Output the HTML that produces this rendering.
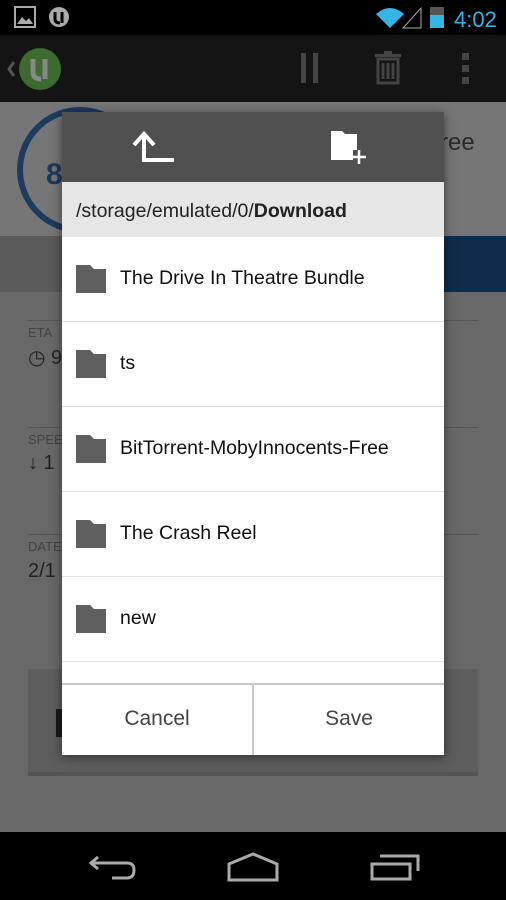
<!DOCTYPE html>
<html><head><style>
*{margin:0;padding:0;box-sizing:border-box}
body{width:506px;height:900px;background:#686868;font-family:"Liberation Sans",sans-serif;position:relative;overflow:hidden}
.a{position:absolute}
.row{position:absolute;left:0;width:382px;height:85px;border-bottom:1px solid #e2e2e2}
.row svg{position:absolute;left:14px;top:28px}
.row span{position:absolute;left:58px;top:30px;font-size:19.5px;color:#111}
</style></head><body>
<div class="a" style="left:0;top:0;width:506px;height:35px;background:#000"></div>
<svg class="a" style="left:0;top:0" width="506" height="35">
<rect x="15" y="7" width="20" height="20" fill="none" stroke="#aaa" stroke-width="2"/>
<path d="M17 24 L22 17 L26 21 L29 18 L33 24Z" fill="#aaa"/>
<circle cx="59" cy="17" r="10" fill="#aaa"/><path d="M55 12 v7 q0 4 5 4 M62 12 v11" stroke="#000" stroke-width="3" fill="none"/>
<path d="M376 14 Q390 2 404 14 L390 28Z" fill="#33b5e5"/>
<path d="M403 28 L421 8 V28Z" fill="none" stroke="#aaa" stroke-width="1"/>
<rect x="430" y="7" width="14" height="21" fill="#33b5e5"/><rect x="430" y="7" width="14" height="8" fill="#555"/>
<text x="454" y="27" font-size="22" fill="#33b5e5" font-family="Liberation Sans">4:02</text>
</svg>
<div class="a" style="left:0;top:35px;width:506px;height:67px;background:#141414"></div>
<svg class="a" style="left:0;top:35px" width="506" height="67">
<path d="M14 27 L9 34 L14 41" stroke="#555" stroke-width="3" fill="none"/>
<circle cx="40" cy="34" r="21" fill="#3c6a2f"/><path d="M33 24 v13 q0 7 8 7 M45 24 v20" stroke="#888" stroke-width="5" fill="none"/>
<rect x="301" y="18" width="5" height="30" fill="#444"/><rect x="313" y="18" width="5" height="30" fill="#444"/>
<rect x="375" y="19" width="26" height="3" fill="#444"/><rect x="384" y="16" width="8" height="4" fill="#444"/>
<path d="M378 24 h20 v24 h-20z M383 28 v16 M388 28 v16 M393 28 v16" stroke="#444" stroke-width="3" fill="none"/>
<rect x="462" y="18" width="7" height="7" fill="#444"/><rect x="462" y="30" width="7" height="7" fill="#444"/><rect x="462" y="42" width="7" height="7" fill="#444"/>
</svg>
<div class="a" style="left:0;top:102px;width:506px;height:134px;background:#767676"></div>
<svg class="a" style="left:0;top:102px" width="506" height="134">
<circle cx="80" cy="68" r="60" fill="none" stroke="#1d3b5e" stroke-width="6"/>
<text x="46" y="82" font-size="30" font-weight="bold" fill="#1d3b5e">8</text>
<text x="440" y="48" font-size="24" fill="#2a2a2a">ree</text>
</svg>
<div class="a" style="left:0;top:236px;width:506px;height:56px;background:#5a5a5a"></div>
<div class="a" style="left:440px;top:236px;width:66px;height:56px;background:#0f2c4d"></div>
<div class="a" style="left:28px;top:320px;width:450px;height:1px;background:#555"></div>
<div class="a" style="left:28px;top:427px;width:450px;height:1px;background:#555"></div>
<div class="a" style="left:28px;top:534px;width:450px;height:1px;background:#555"></div>
<div class="a" style="left:28px;top:325px;font-size:13px;color:#444">ETA</div>
<div class="a" style="left:28px;top:345px;font-size:20px;color:#222">◷ 9</div>
<div class="a" style="left:28px;top:432px;font-size:13px;color:#444">SPEE</div>
<div class="a" style="left:28px;top:452px;font-size:20px;color:#222">↓ 1</div>
<div class="a" style="left:28px;top:539px;font-size:13px;color:#444">DATE</div>
<div class="a" style="left:28px;top:560px;font-size:20px;color:#222">2/1</div>
<div class="a" style="left:28px;top:669px;width:450px;height:107px;background:#5d5d5d;border-bottom:4px solid #555"></div>
<div class="a" style="left:56px;top:709px;width:8px;height:28px;background:#1a1a1a"></div>
<div class="a" style="left:62px;top:112px;width:382px;height:643px;background:#fff;box-shadow:0 2px 10px rgba(0,0,0,.5);overflow:hidden">
<div class="a" style="left:0;top:0;width:382px;height:70px;background:#505050"></div>
<svg class="a" style="left:0;top:0" width="382" height="70">
<path d="M82 50 V23 M72 33 L82 22 L92 33 M82 48 H112" stroke="#fff" stroke-width="4" fill="none"/>
<path d="M269 19 h11 l3 3 h12 v16 h-4 v10 h-22z" fill="#fff"/>
<path d="M297 38 v14 M290 45 h14" stroke="#fff" stroke-width="2.5"/>
</svg>
<div class="a" style="left:0;top:70px;width:382px;height:55px;background:#e6e6e6;font-size:19.5px;color:#222;padding:18px 0 0 14px">/storage/emulated/0/<b>Download</b></div>
<div class="row" style="top:125px"><svg width="30" height="28"><path d="M0 0h14l4 4h12v24H0z" fill="#5f5f5f"/></svg><span>The Drive In Theatre Bundle</span></div>
<div class="row" style="top:210px"><svg width="30" height="28"><path d="M0 0h14l4 4h12v24H0z" fill="#5f5f5f"/></svg><span>ts</span></div>
<div class="row" style="top:295px"><svg width="30" height="28"><path d="M0 0h14l4 4h12v24H0z" fill="#5f5f5f"/></svg><span>BitTorrent-MobyInnocents-Free</span></div>
<div class="row" style="top:380px"><svg width="30" height="28"><path d="M0 0h14l4 4h12v24H0z" fill="#5f5f5f"/></svg><span>The Crash Reel</span></div>
<div class="row" style="top:465px"><svg width="30" height="28"><path d="M0 0h14l4 4h12v24H0z" fill="#5f5f5f"/></svg><span>new</span></div>
<div class="a" style="left:0;top:571px;width:382px;height:2px;background:#c8c8c8"></div>
<div class="a" style="left:190px;top:573px;width:2px;height:70px;background:#c8c8c8"></div>
<div class="a" style="left:0;top:595px;width:190px;text-align:center;font-size:21px;color:#444">Cancel</div>
<div class="a" style="left:192px;top:595px;width:190px;text-align:center;font-size:21px;color:#444">Save</div>
</div>
<div class="a" style="left:0;top:832px;width:506px;height:68px;background:#000"></div>
<svg class="a" style="left:0;top:832px" width="506" height="68">
<path d="M98 25 L91 31 L98 37 M91 31 H127 Q134 31 134 38 Q134 46 127 46 H112" stroke="#aaa" stroke-width="3" fill="none"/>
<path d="M229 48 V32 L253 22 L277 32 V48Z" stroke="#aaa" stroke-width="3" fill="none"/>
<path d="M372 32 h38 v15 h-38z M380 24 h38 v15" stroke="#aaa" stroke-width="3" fill="none"/>
</svg>
</body></html>
